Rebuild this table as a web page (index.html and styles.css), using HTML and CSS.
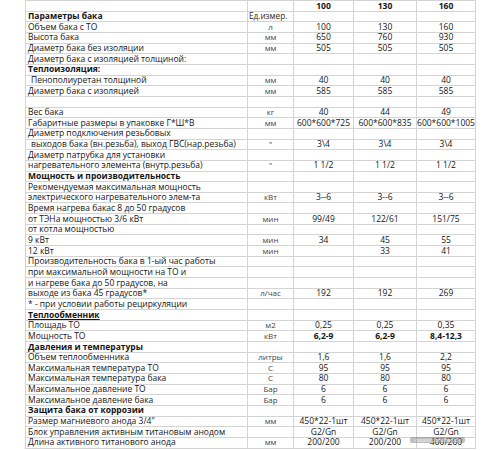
FILE: index.html
```html
<!DOCTYPE html>
<html lang="ru">
<head>
<meta charset="utf-8">
<title>Параметры бака</title>
<link rel="stylesheet" href="styles.css">
</head>
<body>
<div class="sheet">
  <div class="grid">
    <div class="c l"></div><div class="c u"></div><div class="c v b">100</div><div class="c v b">130</div><div class="c v b">160</div>
    <div class="c l b">Параметры бака</div><div class="c u h">Ед.измер.</div><div class="c v"></div><div class="c v"></div><div class="c v"></div>
    <div class="c l">Объем бака с ТО</div><div class="c u">л</div><div class="c v">100</div><div class="c v">130</div><div class="c v">160</div>
    <div class="c l">Высота бака</div><div class="c u">мм</div><div class="c v">650</div><div class="c v">760</div><div class="c v">930</div>
    <div class="c l">Диаметр бака без изоляции</div><div class="c u">мм</div><div class="c v">505</div><div class="c v">505</div><div class="c v">505</div>
    <div class="c l">Диаметр бака с изоляцией толщиной:</div><div class="c u"></div><div class="c v"></div><div class="c v"></div><div class="c v"></div>
    <div class="c l b">Теплоизоляция:</div><div class="c u"></div><div class="c v"></div><div class="c v"></div><div class="c v"></div>
    <div class="c l in">Пенополиуретан толщиной</div><div class="c u">мм</div><div class="c v">40</div><div class="c v">40</div><div class="c v">40</div>
    <div class="c l">Диаметр бака с изоляцией</div><div class="c u">мм</div><div class="c v">585</div><div class="c v">585</div><div class="c v">585</div>
    <div class="c l"></div><div class="c u"></div><div class="c v"></div><div class="c v"></div><div class="c v"></div>
    <div class="c l">Вес бака</div><div class="c u">кг</div><div class="c v">40</div><div class="c v">44</div><div class="c v">49</div>
    <div class="c l">Габаритные размеры в упаковке Г*Ш*В</div><div class="c u">мм</div><div class="c v">600*600*725</div><div class="c v">600*600*835</div><div class="c v">600*600*1005</div>
    <div class="c l">Диаметр подключения резьбовых</div><div class="c u"></div><div class="c v"></div><div class="c v"></div><div class="c v"></div>
    <div class="c l in">выходов бака (вн.резьба), выход ГВС(нар.резьба)</div><div class="c u">"</div><div class="c v">3\4</div><div class="c v">3\4</div><div class="c v">3\4</div>
    <div class="c l">Диаметр патрубка для установки</div><div class="c u"></div><div class="c v"></div><div class="c v"></div><div class="c v"></div>
    <div class="c l">нагревательного элемента (внутр.резьба)</div><div class="c u">"</div><div class="c v">1 1/2</div><div class="c v">1 1/2</div><div class="c v">1 1/2</div>
    <div class="c l b">Мощность и производительность</div><div class="c u"></div><div class="c v"></div><div class="c v"></div><div class="c v"></div>
    <div class="c l">Рекомендуемая максимальная мощность</div><div class="c u"></div><div class="c v"></div><div class="c v"></div><div class="c v"></div>
    <div class="c l">электрического нагревательного элем-та</div><div class="c u">кВт</div><div class="c v">3--6</div><div class="c v">3--6</div><div class="c v">3--6</div>
    <div class="c l">Время нагрева бакас 8 до 50 градусов</div><div class="c u"></div><div class="c v"></div><div class="c v"></div><div class="c v"></div>
    <div class="c l">от ТЭНа мощностью 3/6 кВт</div><div class="c u">мин</div><div class="c v">99/49</div><div class="c v">122/61</div><div class="c v">151/75</div>
    <div class="c l">от котла мощностью</div><div class="c u"></div><div class="c v"></div><div class="c v"></div><div class="c v"></div>
    <div class="c l">9 кВт</div><div class="c u">мин</div><div class="c v">34</div><div class="c v">45</div><div class="c v">55</div>
    <div class="c l">12 кВт</div><div class="c u">мин</div><div class="c v"></div><div class="c v">33</div><div class="c v">41</div>
    <div class="c l">Производительность бака в 1-ый час работы</div><div class="c u"></div><div class="c v"></div><div class="c v"></div><div class="c v"></div>
    <div class="c l">при максимальной мощности на ТО и</div><div class="c u"></div><div class="c v"></div><div class="c v"></div><div class="c v"></div>
    <div class="c l">и нагреве бака до 50 градусов, на</div><div class="c u"></div><div class="c v"></div><div class="c v"></div><div class="c v"></div>
    <div class="c l">выходе из бака 45 градусов*</div><div class="c u">л/час</div><div class="c v">192</div><div class="c v">192</div><div class="c v">269</div>
    <div class="c l">* - при условии работы рециркуляции</div><div class="c u"></div><div class="c v"></div><div class="c v"></div><div class="c v"></div>
    <div class="c l b ul">Теплообменник</div><div class="c u"></div><div class="c v"></div><div class="c v"></div><div class="c v"></div>
    <div class="c l">Площадь ТО</div><div class="c u">м2</div><div class="c v">0,25</div><div class="c v">0,25</div><div class="c v">0,35</div>
    <div class="c l">Мощность ТО</div><div class="c u">кВт</div><div class="c v b">6,2-9</div><div class="c v b">6,2-9</div><div class="c v b">8,4-12,3</div>
    <div class="c l b">Давления и температуры</div><div class="c u"></div><div class="c v"></div><div class="c v"></div><div class="c v"></div>
    <div class="c l">Объем теплообменника</div><div class="c u">литры</div><div class="c v">1,6</div><div class="c v">1,6</div><div class="c v">2,2</div>
    <div class="c l">Максимальная температура ТО</div><div class="c u">С</div><div class="c v">95</div><div class="c v">95</div><div class="c v">95</div>
    <div class="c l">Максимальная температура бака</div><div class="c u">С</div><div class="c v">80</div><div class="c v">80</div><div class="c v">80</div>
    <div class="c l">Максимальное давление ТО</div><div class="c u">Бар</div><div class="c v">6</div><div class="c v">6</div><div class="c v">6</div>
    <div class="c l">Максимальное давление бака</div><div class="c u">Бар</div><div class="c v">6</div><div class="c v">6</div><div class="c v">6</div>
    <div class="c l b">Защита бака от коррозии</div><div class="c u"></div><div class="c v"></div><div class="c v"></div><div class="c v"></div>
    <div class="c l">Размер магниевого анода 3/4"</div><div class="c u">мм</div><div class="c v">450*22-1шт</div><div class="c v">450*22-1шт</div><div class="c v">450*22-1шт</div>
    <div class="c l">Блок управления активным титановым анодом</div><div class="c u"></div><div class="c v">G2/Gn</div><div class="c v">G2/Gn</div><div class="c v">G2/Gn</div>
    <div class="c l">Длина активного титанового анода</div><div class="c u">мм</div><div class="c v">200/200</div><div class="c v">200/200</div><div class="c v">400/200</div>
  </div>
  <div class="mark">catalog.onliner.by</div>
</div>
</body>
</html>
```

FILE: styles.css
```css
html, body {
  margin: 0;
  padding: 0;
  background: #ffffff;
}

.sheet {
  position: relative;
  width: 500px;
  height: 450px;
  overflow: hidden;
}

.grid {
  display: grid;
  grid-template-columns: 222px 46px 60px 63px 59px;
  grid-auto-rows: 10.667px;
  margin-left: 25px;
  width: max-content;
  border-top: 1px solid #d4d4d4;
  border-left: 1px solid #d4d4d4;
  font-family: "Open Sans", "DejaVu Sans", sans-serif;
  font-size: 8.5px;
  color: #151515;
}

.c {
  box-sizing: border-box;
  border-right: 1px solid #d4d4d4;
  border-bottom: 1px solid #d4d4d4;
  line-height: 7px;
  padding-top: 0.5px;
  white-space: nowrap;
  overflow: visible;
}

.l {
  padding-left: 2px;
  text-align: left;
}

.in {
  padding-left: 5px;
}

.u {
  text-align: center;
  color: #444;
  font-size: 8px;
}

.h {
  text-align: left;
  padding-left: 1px;
  color: #2a2a2a;
  font-size: 8.2px;
}

.v {
  text-align: center;
}

.b {
  font-weight: 700;
}

.ul {
  text-decoration: underline;
}

.mark {
  position: absolute;
  left: 410px;
  top: 437px;
  width: 55px;
  height: 6px;
  background: rgba(110, 110, 110, 0.45);
  border-radius: 2px;
  color: rgba(255, 255, 255, 0.85);
  font-family: "Open Sans", "DejaVu Sans", sans-serif;
  font-size: 5.5px;
  line-height: 6px;
  text-align: center;
}
```
